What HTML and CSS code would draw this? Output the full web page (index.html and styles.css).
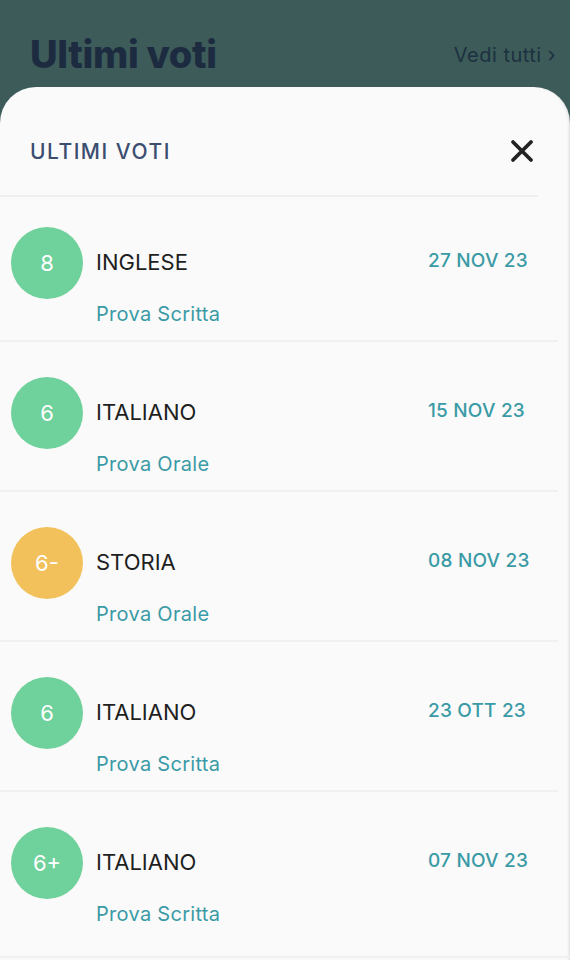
FILE: index.html
```html
<!DOCTYPE html>
<html lang="it">
<head>
  <meta charset="UTF-8" />
  <meta name="viewport" content="width=device-width, initial-scale=1.0"/>
  <title>Ultimi voti</title>
  <link rel="stylesheet" href="styles.css">
</head>
<body>

  <div class="top-bar">
    <h1>Ultimi voti</h1>
    <span class="see-all">Vedi tutti ›</span>
  </div>

  <div class="sheet">
    <div class="sheet-head">
      <h2>ULTIMI VOTI</h2>
      <svg class="close" width="24" height="24" viewBox="0 0 24 24">
        <path d="M3 3 L21 21 M21 3 L3 21" stroke="#222" stroke-width="3.8" stroke-linecap="round" fill="none"/>
      </svg>
    </div>

    <div class="grade first">
      <div class="mark green">8</div>
      <div class="info">
        <div class="subject">INGLESE</div>
        <div class="type">Prova Scritta</div>
      </div>
      <div class="date">27 NOV 23</div>
    </div>

    <div class="grade">
      <div class="mark green">6</div>
      <div class="info">
        <div class="subject">ITALIANO</div>
        <div class="type">Prova Orale</div>
      </div>
      <div class="date">15 NOV 23</div>
    </div>

    <div class="grade">
      <div class="mark yellow">6-</div>
      <div class="info">
        <div class="subject">STORIA</div>
        <div class="type">Prova Orale</div>
      </div>
      <div class="date">08 NOV 23</div>
    </div>

    <div class="grade">
      <div class="mark green">6</div>
      <div class="info">
        <div class="subject">ITALIANO</div>
        <div class="type">Prova Scritta</div>
      </div>
      <div class="date">23 OTT 23</div>
    </div>

    <div class="grade last">
      <div class="mark green">6+</div>
      <div class="info">
        <div class="subject">ITALIANO</div>
        <div class="type">Prova Scritta</div>
      </div>
      <div class="date">07 NOV 23</div>
    </div>
  </div>

</body>
</html>
```

FILE: styles.css
```css
body {
  margin: 0;
  font-family: 'Inter', 'Noto Sans', sans-serif;
  background-color: #3c5b59;
  height: 960px;
  overflow: hidden;
}

.top-bar {
  height: 87px;
  display: flex;
  justify-content: space-between;
  align-items: flex-start;
  padding: 0 14px 0 30px;
  box-sizing: border-box;
}

.top-bar h1 {
  margin: 31px 0 0;
  font-size: 38px;
  font-weight: 800;
  letter-spacing: -0.3px;
  color: #1c2b40;
  line-height: 46px;
}

.see-all {
  margin-top: 43px;
  font-size: 20px;
  letter-spacing: 0.5px;
  color: #1d3140;
  line-height: 24px;
}

.sheet {
  background: #fafafa;
  border-radius: 36px 36px 0 0;
  height: 873px;
  box-shadow: inset -3px 0 3px -2px rgba(0,0,0,0.12);
}

.sheet-head {
  height: 110px;
  display: flex;
  justify-content: space-between;
  align-items: center;
  padding: 20px 4px 0 30px;
  box-sizing: border-box;
  margin-right: 32px;
  border-bottom: 2px solid #efefef;
}

.sheet-head h2 {
  margin: 0;
  font-size: 21px;
  font-weight: 500;
  letter-spacing: 1.5px;
  color: #3b4e70;
}

.grade {
  display: flex;
  align-items: flex-start;
  height: 150px;
  box-sizing: border-box;
  padding: 35px 0 0 11px;
  margin-right: 12px;
  border-bottom: 2px solid #f0f0f0;
}

.grade.first {
  height: 145px;
  padding-top: 30px;
}

.grade.last {
  height: 166px;
  margin-right: 0;
}

.mark {
  width: 72px;
  height: 72px;
  border-radius: 50%;
  display: flex;
  align-items: center;
  justify-content: center;
  color: #fff;
  font-size: 22px;
  flex-shrink: 0;
}

.green { background: #6fd19b; }
.yellow { background: #f2c15b; }

.info {
  margin-left: 13px;
  width: 332px;
}

.subject {
  margin-top: 21px;
  font-size: 22px;
  color: #1f1f1f;
  line-height: 28px;
}

.type {
  margin-top: 26px;
  font-size: 20px;
  letter-spacing: 0.3px;
  color: #3a9aa6;
  line-height: 24px;
}

.date {
  margin-top: 22px;
  font-size: 19px;
  font-weight: 500;
  letter-spacing: 0.2px;
  color: #3a9aa6;
  line-height: 24px;
}
```
